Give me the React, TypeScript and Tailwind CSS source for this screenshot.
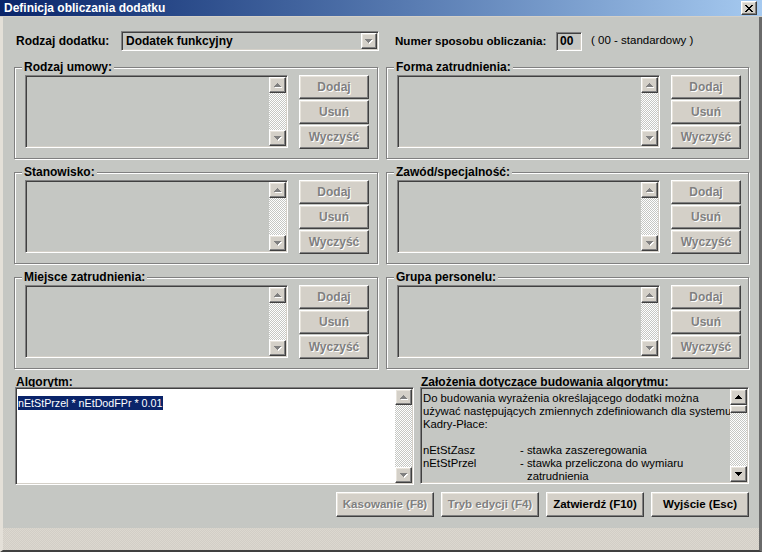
import React from "react";

const raised =
  "border border-t-white border-l-white border-r-[#404040] border-b-[#404040] shadow-[inset_-1px_-1px_0_#808080,inset_1px_1px_0_#e8e4dc]";
const sunken =
  "border border-t-[#808080] border-l-[#808080] border-r-white border-b-white shadow-[inset_1px_1px_0_#404040,inset_-1px_-1px_0_#d4d0c8]";
const disabledText = "text-[#808080] [text-shadow:1px_1px_0_#ffffff]";
const dither =
  "bg-[image:repeating-conic-gradient(#c5c7c3_0%_25%,#ffffff_0%_50%)] bg-[length:2px_2px]";

function Arrow({ dir, disabled }: { dir: "up" | "down"; disabled?: boolean }) {
  const rows = dir === "up"
    ? [[3, 0, 1], [2, 1, 3], [1, 2, 5], [0, 3, 7]]
    : [[0, 0, 7], [1, 1, 5], [2, 2, 3], [3, 3, 1]];
  return (
    <svg width="8" height="5" viewBox="0 0 8 5" shapeRendering="crispEdges">
      {disabled &&
        rows.map(([x, y, w], i) => (
          <rect key={"s" + i} x={x + 1} y={y + 1} width={w} height={1} fill="#ffffff" />
        ))}
      {rows.map(([x, y, w], i) => (
        <rect key={i} x={x} y={y} width={w} height={1} fill={disabled ? "#808080" : "#000000"} />
      ))}
    </svg>
  );
}

function ScrollBtn({ dir, disabled }: { dir: "up" | "down"; disabled?: boolean }) {
  return (
    <div className={raised + " bg-[#d4d0c8] h-[16px] w-[17px] flex items-center justify-center"}>
      <Arrow dir={dir} disabled={disabled} />
    </div>
  );
}

function ScrollBar({ disabled, thumb }: { disabled?: boolean; thumb?: boolean }) {
  return (
    <div className="flex flex-col w-[17px] h-full">
      <ScrollBtn dir="up" disabled={disabled} />
      {thumb && <div className={raised + " bg-[#d4d0c8] h-[8px] w-[17px]"} />}
      <div className={"flex-1 " + dither} />
      <ScrollBtn dir="down" disabled={disabled} />
    </div>
  );
}

function Btn({
  label,
  disabled,
  className,
}: {
  label: string;
  disabled?: boolean;
  className?: string;
}) {
  return (
    <div
      className={
        raised +
        " bg-[#d4d0c8] flex items-center justify-center font-bold whitespace-nowrap " +
        (disabled ? disabledText : "text-black") +
        " " +
        (className || "")
      }
    >
      {label}
    </div>
  );
}

function Group({ title, w }: { title: string; w: string }) {
  return (
    <div
      className={
        "relative h-[92px] border border-[#808080] shadow-[inset_1px_1px_0_#ffffff,1px_1px_0_#ffffff] " + w
      }
    >
      <span className="absolute left-[7px] top-[-8px] px-[2px] bg-[#c5c7c3] font-bold text-[12px] leading-[14px] text-black whitespace-nowrap">
        {title}
      </span>
      <div className="flex pl-[10px] pt-[7px]">
        <div className={sunken + " w-[263px] h-[73px] p-[1px] flex justify-end bg-[#c5c7c3]"}>
          <ScrollBar disabled />
        </div>
        <div className="ml-[11px] flex flex-col gap-[1px]">
          <Btn label="Dodaj" disabled className="w-[70px] h-[24px] text-[12px]" />
          <Btn label="Usuń" disabled className="w-[70px] h-[24px] text-[12px]" />
          <Btn label="Wyczyść" disabled className="w-[70px] h-[24px] text-[12px]" />
        </div>
      </div>
    </div>
  );
}

export default function App() {
  return (
    <div className="w-[762px] h-[552px] flex flex-col bg-[#c5c7c3] font-['Liberation_Sans',Arial,sans-serif] text-black overflow-hidden">
      {/* Title bar */}
      <div className="h-[17px] flex items-center bg-linear-to-r from-[#0a246a] to-[#a6caf0] border-b border-[#d4d0c8] pl-[4px] pr-[5px]">
        <span className="text-white font-bold text-[12px] leading-[14px] flex-1">
          Definicja obliczania dodatku
        </span>
        <div className={raised + " bg-[#d4d0c8] w-[16px] h-[14px] flex items-center justify-center"}>
          <svg width="8" height="7" viewBox="0 0 8 7" shapeRendering="crispEdges">
            {[0, 1, 2, 3, 4, 5, 6].map((i) => (
              <React.Fragment key={i}>
                <rect x={i} y={i} width={2} height={1} fill="#000" />
                <rect x={6 - i} y={i} width={2} height={1} fill="#000" />
              </React.Fragment>
            ))}
          </svg>
        </div>
      </div>

      {/* Body */}
      <div className="flex-1 flex flex-col border-l-[3px] border-l-[#e4e0d8] border-r-[3px] border-r-[#6a6a6a] border-b-[2px] border-b-[#404040]">
        <div className="flex-1 flex flex-col pl-[11px] pr-[10px] pt-[14px]">
          {/* Row 1 */}
          <div className="flex items-center h-[20px]">
            <span className="ml-[2px] w-[105px] font-bold text-[12px]">Rodzaj dodatku:</span>
            <div className={sunken + " w-[258px] h-[20px] flex items-center bg-[#c5c7c3] p-[1px]"}>
              <span className="flex-1 pl-[3px] font-bold text-[12px]">Dodatek funkcyjny</span>
              <div className={raised + " bg-[#d4d0c8] w-[16px] h-[16px] flex items-center justify-center"}>
                <Arrow dir="down" disabled />
              </div>
            </div>
            <span className="ml-[16px] w-[161px] font-bold text-[11.6px] whitespace-nowrap">Numer sposobu obliczania:</span>
            <div className={sunken + " w-[26px] h-[19px] flex items-center pl-[3px] font-bold text-[12px] bg-[#c5c7c3]"}>
              00
            </div>
            <span className="ml-[9px] text-[11.5px]">( 00 - standardowy )</span>
          </div>

          {/* Groups */}
          <div className="mt-[16px] flex gap-[8px]">
            <Group title="Rodzaj umowy:" w="w-[364px]" />
            <Group title="Forma zatrudnienia:" w="w-[363px]" />
          </div>
          <div className="mt-[13px] flex gap-[8px]">
            <Group title="Stanowisko:" w="w-[364px]" />
            <Group title="Zawód/specjalność:" w="w-[363px]" />
          </div>
          <div className="mt-[13px] flex gap-[8px]">
            <Group title="Miejsce zatrudnienia:" w="w-[364px]" />
            <Group title="Grupa personelu:" w="w-[363px]" />
          </div>

          {/* Bottom section */}
          <div className="mt-[8px] flex gap-[6px]">
            <div className="w-[400px] flex flex-col">
              <span className="ml-[2px] h-[10px] leading-[10px] font-bold text-[12px]">Algorytm:</span>
              <div className={sunken + " ml-[1px] w-[399px] h-[98px] bg-white p-[1px] flex"}>
                <div className="flex-1 pl-[1px] pt-[1px]">
                  <span className="bg-[#0a246a] text-white text-[10.7px] leading-[14px] inline-block pr-[1px]">
                    nEtStPrzel * nEtDodFPr * 0.01
                  </span>
                </div>
                <ScrollBar disabled />
              </div>
            </div>
            <div className="w-[329px] flex flex-col">
              <span className="ml-[1px] h-[10px] leading-[10px] font-bold text-[12px] whitespace-nowrap">
                Założenia dotyczące budowania algorytmu:
              </span>
              <div className={sunken + " w-[329px] h-[97px] bg-[#c5c7c3] p-[1px] flex"}>
                <div className="flex-1 pl-[1px] pt-[3px] text-[11.3px] leading-[13px] overflow-hidden whitespace-nowrap">
                  <div>Do budowania wyrażenia określającego dodatki można</div>
                  <div>używać następujących zmiennych zdefiniowanch dla systemu</div>
                  <div>Kadry-Płace:</div>
                  <div className="h-[13px]" />
                  <div className="grid grid-cols-[97px_1fr]">
                    <span>nEtStZasz</span>
                    <span>- stawka zaszeregowania</span>
                    <span>nEtStPrzel</span>
                    <span>
                      - stawka przeliczona do wymiaru
                      <br />
                      <span className="pl-[7px]">zatrudnienia</span>
                    </span>
                  </div>
                </div>
                <ScrollBar thumb />
              </div>
            </div>
          </div>

          {/* Action buttons */}
          <div className="mt-[7px] flex justify-end gap-[7px]">
            <Btn label="Kasowanie (F8)" disabled className="w-[98px] h-[25px] text-[11.5px]" />
            <Btn label="Tryb edycji (F4)" disabled className="w-[98px] h-[25px] text-[11.5px]" />
            <Btn label="Zatwierdź (F10)" className="w-[98px] h-[25px] text-[11.5px]" />
            <Btn label="Wyjście (Esc)" className="w-[98px] h-[25px] text-[11.5px]" />
          </div>
        </div>

        {/* Status strip */}
        <div className="h-[22px] bg-[image:repeating-conic-gradient(#dcd8d0_0%_25%,#d2cec6_0%_50%)] bg-[length:2px_2px]" />
      </div>
    </div>
  );
}
